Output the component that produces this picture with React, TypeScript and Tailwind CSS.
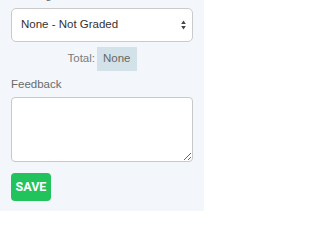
import React from 'react';

const App: React.FC = () => {
    return (
        <div className="h-[211px] w-[204px] overflow-hidden bg-[#f3f6fa] px-[11px] font-['Liberation_Sans',Arial,sans-serif]">
            <div className="-mt-[11px] text-[11.5px] leading-[13px] text-[#666]">Grading</div>

            <div className="relative mt-[6px]">
                <select
                    className="block h-[34px] w-full appearance-none rounded-[5px] border border-[#cacaca] bg-white pl-[9px] pr-6 text-[11.5px] text-[#333] outline-none"
                    defaultValue="none"
                >
                    <option value="none">None - Not Graded</option>
                </select>
                <svg className="pointer-events-none absolute right-[7px] top-[12px] h-[10px] w-[5px]" viewBox="0 0 5 10">
                    <path d="M2.5 0.5 L4.8 4 H0.2 Z" fill="#444" />
                    <path d="M2.5 9.5 L4.8 6 H0.2 Z" fill="#444" />
                </svg>
            </div>

            <div className="mt-[5px] flex items-center justify-center gap-[2px] text-[11.5px]">
                <span className="text-[#7a7a7a]">Total:</span>
                <span className="flex h-[24px] items-center bg-[#d3e2e8] px-[6px] text-[#666]">None</span>
            </div>

            <label className="mt-[5px] block text-[11.5px] leading-[16px] text-[#6a6a6a]">Feedback</label>
            <textarea className="mt-[5px] block h-[65px] w-full rounded-[4px] border border-[#c8c8c8] bg-white outline-none" />

            <button className="mt-[11px] flex h-[28px] w-[40px] items-center justify-center rounded-[4px] bg-[#22c35d] font-['Roboto',sans-serif] text-[12.5px] font-bold text-white">
                SAVE
            </button>
        </div>
    );
};

export default App;
